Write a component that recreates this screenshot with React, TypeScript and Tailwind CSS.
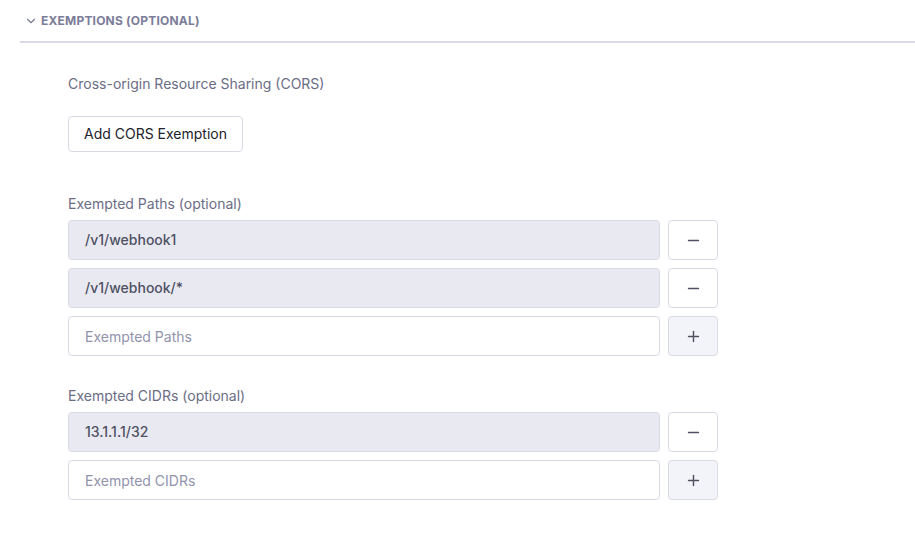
import { ChevronDown, Minus, Plus } from "lucide-react";

function Row({ value, placeholder, add }: { value?: string; placeholder?: string; add?: boolean }) {
  return (
    <div className="flex gap-2">
      {add ? (
        <input
          placeholder={placeholder}
          className="h-10 w-[592px] rounded-[4px] border border-[#d9dae5] bg-white px-4 text-sm text-[#22222a] placeholder:text-[#9293ab] outline-none"
        />
      ) : (
        <div className="flex h-10 w-[592px] items-center rounded-[4px] border border-[#d9dae5] bg-[#e9e9f2] px-4 text-sm font-medium text-[#4f5162]">
          {value}
        </div>
      )}
      <button
        className={`flex h-10 w-[50px] items-center justify-center rounded-[4px] border border-[#d9dae5] text-[#4f5162] ${
          add ? "bg-[#f3f3fa]" : "bg-white"
        }`}
      >
        {add ? <Plus size={17} strokeWidth={2} /> : <Minus size={17} strokeWidth={2} />}
      </button>
    </div>
  );
}

export default function App() {
  return (
    <div className="min-h-screen w-full bg-white font-['Inter',sans-serif]">
      <div className="pl-5">
        <div className="flex h-[41px] items-center gap-[3px] pl-[4px]">
          <ChevronDown size={14} strokeWidth={2} className="text-[#7b7d99]" />
          <span className="text-xs font-bold tracking-[0.2px] text-[#7b7d99]">EXEMPTIONS (OPTIONAL)</span>
        </div>
        <div className="h-[2px] w-full bg-[#d9dae5]" />
      </div>

      <div className="pl-[68px] pt-[31px]">
        <div className="text-sm leading-5 text-[#6b6d85]">Cross-origin Resource Sharing (CORS)</div>
        <button className="mt-[22px] h-9 rounded-[4px] border border-[#d9dae5] bg-white px-[15px] text-sm text-[#22222a]">
          Add CORS Exemption
        </button>

        <div className="mt-[42px] text-sm leading-5 text-[#6b6d85]">Exempted Paths (optional)</div>
        <div className="mt-[6px] flex flex-col gap-2">
          <Row value="/v1/webhook1" />
          <Row value="/v1/webhook/*" />
          <Row placeholder="Exempted Paths" add />
        </div>

        <div className="mt-[30px] text-sm leading-5 text-[#6b6d85]">Exempted CIDRs (optional)</div>
        <div className="mt-[6px] flex flex-col gap-2">
          <Row value="13.1.1.1/32" />
          <Row placeholder="Exempted CIDRs" add />
        </div>
      </div>
    </div>
  );
}
